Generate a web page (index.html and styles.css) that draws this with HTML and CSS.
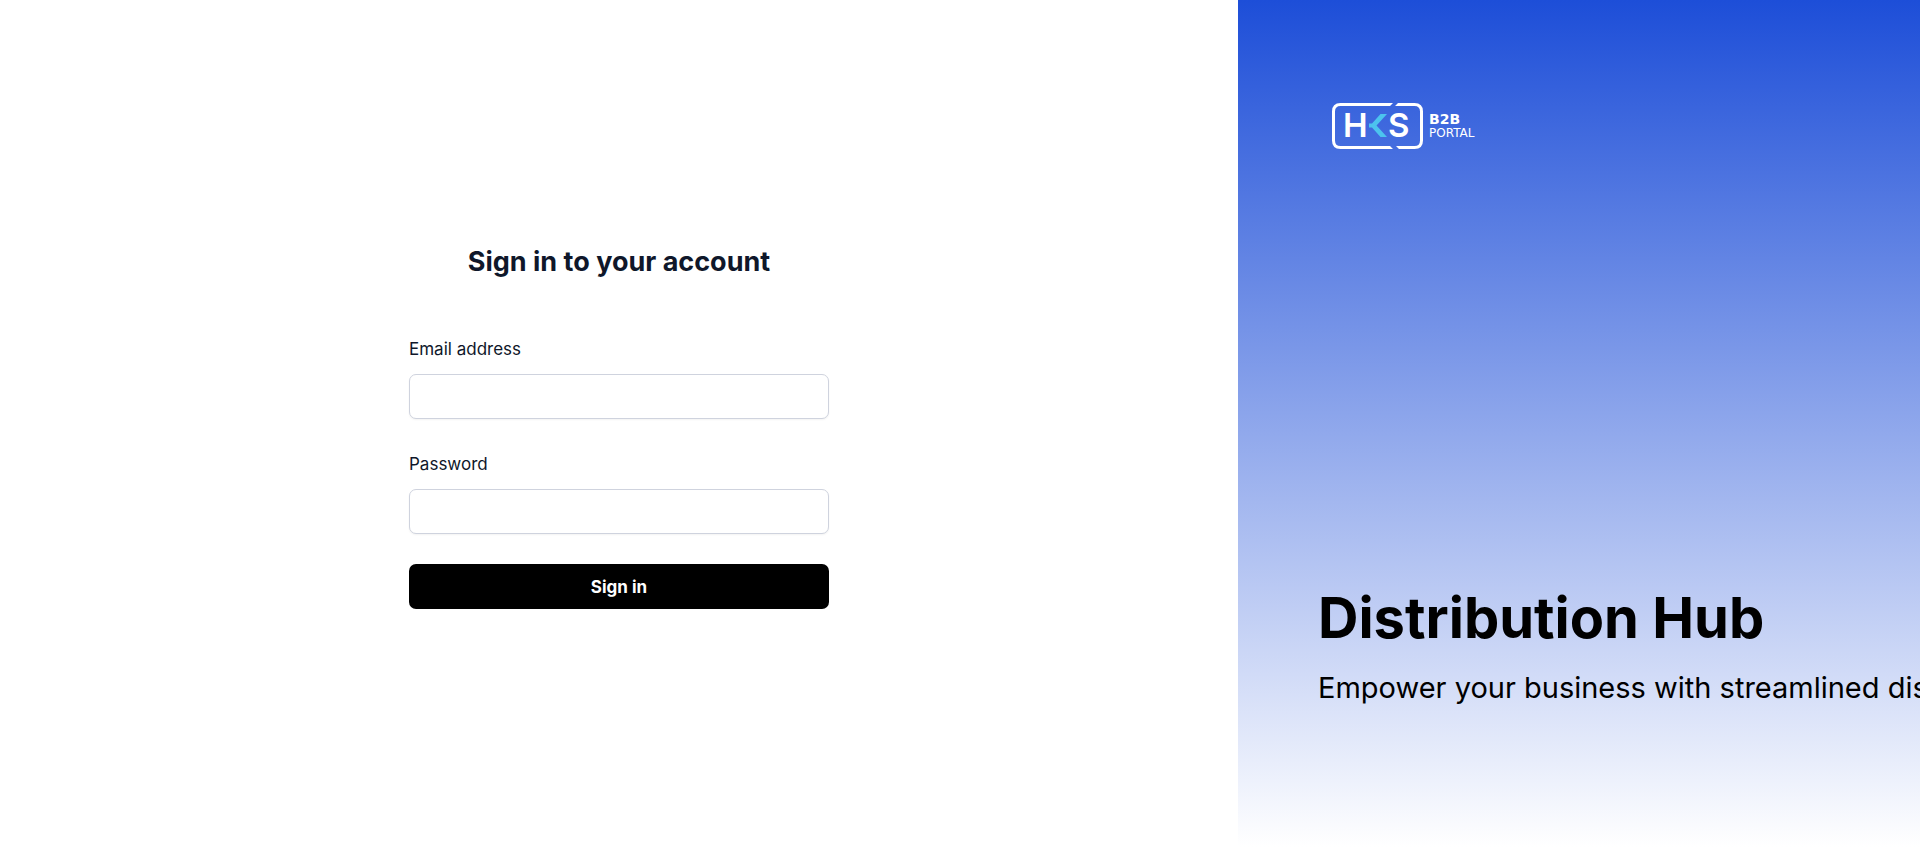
FILE: index.html
```html
<!DOCTYPE html>
<html lang="en">
<head>
<meta charset="utf-8">
<meta name="viewport" content="width=device-width, initial-scale=1">
<title>Sign in - Distribution Hub</title>
<link rel="stylesheet" href="styles.css">
</head>
<body>
<div class="page">
  <main class="login">
    <form class="form">
      <h2 class="form-title">Sign in to your account</h2>
      <div class="field">
        <label class="label" for="email">Email address</label>
        <input class="input" id="email" name="email" type="email" autocomplete="email">
      </div>
      <div class="field">
        <label class="label" for="password">Password</label>
        <input class="input" id="password" name="password" type="password" autocomplete="current-password">
      </div>
      <button class="submit" type="submit">Sign in</button>
    </form>
  </main>
  <aside class="hero">
    <svg class="logo" width="150" height="50" viewBox="0 0 150 50" role="img" aria-label="HKS B2B Portal">
      <g fill="none" stroke="#fff" stroke-width="3">
        <path d="M56 2.500H8.500Q1.500 2.500 1.500 9.500V38.500Q1.500 45.500 8.500 45.500H58"/>
        <path d="M67 2.500H82.500Q89.500 2.500 89.500 9.500V38.500Q89.500 45.500 82.500 45.500H68"/>
      </g>
      <path fill="#fff" d="M56 1H61L58 4H56ZM66 1H68V4H63ZM58 44L61 47H58ZM64 44H68V47H67Z"/>
      <path fill="#4cc3ee" d="M55 12H48.500L40 21.500H37V25.500H40L48.500 35H55L44.500 23.500Z"/>
      <g class="logo-text">
        <text class="logo-mark" x="11" y="35">H</text>
        <text class="logo-mark" x="56" y="35">S</text>
        <text class="logo-name" x="97" y="22">B2B</text>
        <text class="logo-sub" x="97" y="35">PORTAL</text>
      </g>
    </svg>
    <div class="pitch">
      <h1 class="pitch-title">Distribution Hub</h1>
      <p class="pitch-text">Empower your business with streamlined distribution</p>
    </div>
  </aside>
</div>
</body>
</html>
```
FILE: styles.css
```css
* { box-sizing: border-box; }
body { margin: 0; background: #fff; color: #0f172a; font-family: Inter, "Liberation Sans", sans-serif; }
.page { display: grid; grid-template-columns: minmax(0, 1238fr) minmax(0, 682fr); min-height: 100vh; }
.login { display: flex; align-items: center; justify-content: center; padding: 30px 24px 24px; }
.form { display: flex; flex-direction: column; gap: 30px; width: 100%; max-width: 420px; }
.form-title { margin: 0 0 24px; font-size: 27px; font-weight: 700; line-height: 36px; text-align: center; }
.field { display: flex; flex-direction: column; gap: 11px; }
.label { padding-top: 1px; font-size: 17px; line-height: 28px; }
.input { width: 100%; height: 45px; padding: 8px 12px; border: 1px solid #cfd3de; border-radius: 7px; background: #fff; box-shadow: 0 1px 2px rgba(0, 0, 0, 0.05); font: inherit; }
.submit { height: 45px; border: 0; border-radius: 7px; background: #000; color: #fff; font: inherit; font-size: 17px; font-weight: 700; }
.hero { display: flex; flex-direction: column; justify-content: space-between; padding: 102px 0 139px 80px; overflow: hidden; background: linear-gradient(#1d4ed8, #fff); color: #000; }
.logo { margin-left: 14px; }
.logo-text { fill: #fff; font-family: Inter, sans-serif; }
.logo-mark { font-size: 33px; font-weight: 600; }
.logo-name { font: 700 14px "DejaVu Sans", sans-serif; }
.logo-sub { font: 400 12px "DejaVu Sans", sans-serif; }
.pitch-title { margin: 0; font-size: 56px; font-weight: 700; line-height: 60px; white-space: nowrap; }
.pitch-text { margin: 20px 0 0; font-size: 29px; line-height: 40px; white-space: nowrap; }
```
